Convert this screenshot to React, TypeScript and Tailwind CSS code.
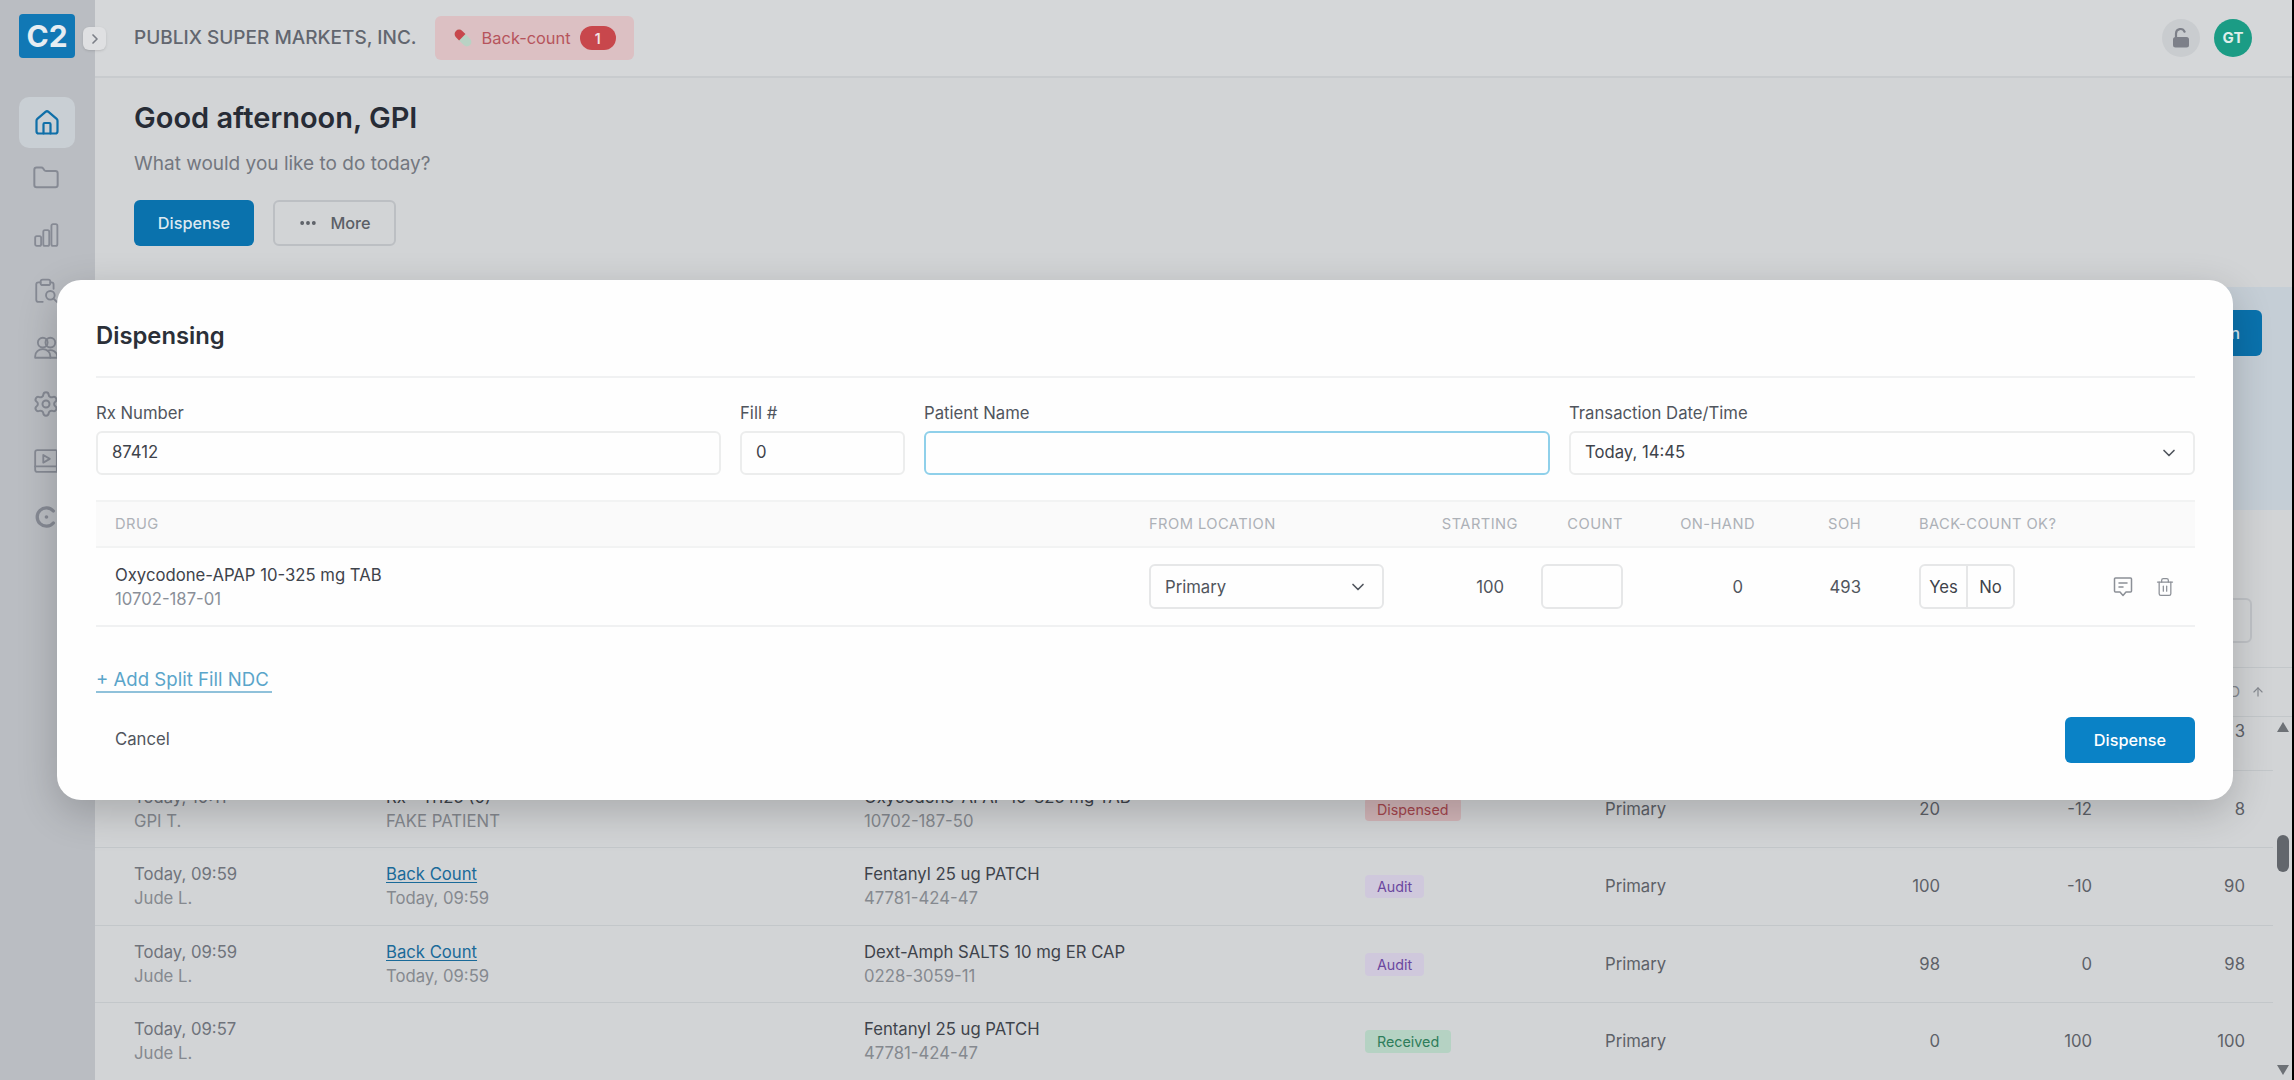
import { ChevronDown, ChevronRight, Ellipsis, House, Folder, Settings, Trash2, ArrowUp } from "lucide-react";

const iconProps = { width: 26, height: 26, viewBox: "0 0 24 24", fill: "none", stroke: "#868a94", strokeWidth: 1.7, strokeLinecap: "round" as const, strokeLinejoin: "round" as const };

function Bars() {
  return (
    <svg {...iconProps}>
      <rect x="2" y="13" width="5.5" height="9" rx="1.5" />
      <rect x="9.5" y="7.5" width="5.5" height="14.5" rx="1.5" />
      <rect x="17" y="2" width="5.5" height="20" rx="1.5" />
    </svg>
  );
}
function ClipSearch() {
  return (
    <svg {...iconProps}>
      <path d="M7 4H5a2 2 0 0 0-2 2v14a2 2 0 0 0 2 2h4" />
      <path d="M16 4h1a2 2 0 0 1 2 2v4" />
      <rect x="7" y="1.500" width="9" height="5" rx="2" />
      <circle cx="16" cy="16" r="4" />
      <path d="m19 19 3.500 3.500" />
    </svg>
  );
}
function People() {
  return (
    <svg {...iconProps}>
      <circle cx="9" cy="7" r="4.500" />
      <circle cx="16" cy="7" r="4.500" />
      <path d="M2 21v-1.500a7 6.500 0 0 1 14 0V21Z" />
      <path d="M13.500 14.500a6.500 6 0 0 1 9 5.500v1H16" />
    </svg>
  );
}
function BookPlay() {
  return (
    <svg {...iconProps}>
      <path d="M2 17V4a2 2 0 0 1 2-2h17a1 1 0 0 1 1 1v14Z" />
      <path d="M2 17v3a2 2 0 0 0 2 2h18v-5" />
      <path d="m9.500 6.500 6 3.500-6 3.500Z" />
    </svg>
  );
}
function LogoC() {
  return (
    <svg width="22" height="24" viewBox="0 0 24 24" fill="none">
      <path d="M20 5.500A10 10 0 1 0 20 18.500" stroke="#868a94" strokeWidth="3.600" strokeLinecap="round" />
      <circle cx="12.500" cy="12" r="2" fill="#868a94" />
    </svg>
  );
}
function Pill() {
  return (
    <svg width="22" height="22" viewBox="0 0 22 22">
      <g transform="rotate(45 11 11)">
        <rect x="1" y="6.500" width="20" height="9" rx="4.500" fill="#b9d2c4" />
        <path d="M5.500 6.500H10v9H5.500a4.500 4.500 0 0 1 0-9Z" fill="#c8474c" />
      </g>
    </svg>
  );
}
function Comment() {
  return (
    <svg width="20" height="22" viewBox="0 0 20 22" fill="none" stroke="#8c9097" strokeWidth="1.500" strokeLinejoin="round" strokeLinecap="round">
      <path d="M2.500 2h15a1 1 0 0 1 1 1v12a1 1 0 0 1-1 1H13l-3 3.500L7 16H2.500a1 1 0 0 1-1-1V3a1 1 0 0 1 1-1Z" />
      <path d="M6 7h8M6 11h4" />
    </svg>
  );
}
function OpenLock() {
  return (
    <svg width="20" height="22" viewBox="0 0 20 22" fill="none">
      <path d="M5 10V6.500a4.500 4.500 0 0 1 8.600-1.800" stroke="#7d8089" strokeWidth="2.200" strokeLinecap="round" />
      <rect x="2" y="10" width="16" height="10.500" rx="2.500" fill="#7d8089" />
    </svg>
  );
}

function NavIcon({ children }: { children: React.ReactNode }) {
  return <div className="flex h-[56.5px] items-center justify-center pr-[3px]">{children}</div>;
}

type Row = {
  t?: string; u?: string; link?: string; sub?: string; sub1?: string;
  drug?: string; ndc?: string; badge?: string; loc?: string; a?: string; b?: string; c: string;
};

const rows: Row[] = [
  { c: "3" },
  { t: "Today, 10:11", u: "GPI T.", sub1: "Rx - 11125 (0)", sub: "FAKE PATIENT", drug: "Oxycodone-APAP 10-325 mg TAB", ndc: "10702-187-50", badge: "Dispensed", loc: "Primary", a: "20", b: "-12", c: "8" },
  { t: "Today, 09:59", u: "Jude L.", link: "Back Count", sub: "Today, 09:59", drug: "Fentanyl 25 ug PATCH", ndc: "47781-424-47", badge: "Audit", loc: "Primary", a: "100", b: "-10", c: "90" },
  { t: "Today, 09:59", u: "Jude L.", link: "Back Count", sub: "Today, 09:59", drug: "Dext-Amph SALTS 10 mg ER CAP", ndc: "0228-3059-11", badge: "Audit", loc: "Primary", a: "98", b: "0", c: "98" },
  { t: "Today, 09:57", u: "Jude L.", drug: "Fentanyl 25 ug PATCH", ndc: "47781-424-47", badge: "Received", loc: "Primary", a: "0", b: "100", c: "100" },
];

function Badge({ name }: { name?: string }) {
  if (!name) return null;
  if (name === "Dispensed") return <span className="rounded-[4px] bg-[#d3b6b9] px-[12px] py-[3px] text-[14.3px] leading-[18px] text-[#a5464e]">{name}</span>;
  if (name === "Audit") return <span className="rounded-[4px] bg-[#cfc8dc] px-[12px] py-[3px] text-[14.3px] leading-[18px] text-[#6b479f]">{name}</span>;
  return <span className="rounded-[4px] bg-[#b5d2c3] px-[12px] py-[3px] text-[14.3px] leading-[18px] text-[#2e7d5b]">{name}</span>;
}

function TableRow({ r }: { r: Row }) {
  return (
    <div className="grid h-[77.5px] shrink-0 grid-cols-[291px_478px_501px_240px_335px_152px_153px_28px] items-center border-b border-[#c3c7ca] text-[16.7px] leading-[24px]">
      <div className="pl-[39px]">
        <div className="text-[#6f737b]">{r.t}</div>
        <div className="text-[#85898f]">{r.u}</div>
      </div>
      <div>
        {r.link && <div className="text-[#1a6a99] underline underline-offset-2">{r.link}</div>}
        {r.sub1 && <div className="text-[#3e434b]">{r.sub1}</div>}
        {r.sub && <div className="text-[#85898f]">{r.sub}</div>}
      </div>
      <div>
        <div className="text-[#3e434b]">{r.drug}</div>
        <div className="text-[#85898f]">{r.ndc}</div>
      </div>
      <div><Badge name={r.badge} /></div>
      <div className="flex justify-between text-[#5d6168]">
        <span>{r.loc}</span>
        <span>{r.a}</span>
      </div>
      <div className="text-right text-[#5d6168]">{r.b}</div>
      <div className="text-right text-[#5d6168]">{r.c}</div>
      <div />
    </div>
  );
}

const headCell = "text-[14.7px] uppercase leading-[20px] tracking-[0.03em] text-[#adb1b7]";

export default function App() {
  return (
    <div className="relative flex h-[1080px] w-[2294px] overflow-hidden bg-[#d2d4d6] font-['Inter',sans-serif]">
      <aside className="flex w-[95px] shrink-0 flex-col bg-[#babdc2]">
        <div className="flex h-[97px] shrink-0 items-start pl-[19px] pt-[14px]">
          <div className="flex h-[44px] w-[56px] items-center justify-center rounded-[4px] bg-[#1178b5] text-[30px] font-bold leading-none text-[#e6edf2]">C2</div>
        </div>
        <div className="mx-[19px] flex h-[51px] w-[56px] items-center justify-center rounded-[10px] bg-[#c9cfd4]">
          <House size={28} color="#0f6fa8" strokeWidth={1.9} />
        </div>
        <div className="mt-[2px]">
          <NavIcon><Folder size={28} color="#868a94" strokeWidth={1.7} /></NavIcon>
          <NavIcon><Bars /></NavIcon>
          <NavIcon><ClipSearch /></NavIcon>
          <NavIcon><People /></NavIcon>
          <NavIcon><Settings size={28} color="#868a94" strokeWidth={1.7} /></NavIcon>
          <NavIcon><BookPlay /></NavIcon>
          <NavIcon><LogoC /></NavIcon>
        </div>
      </aside>

      <main className="flex min-w-0 flex-1 flex-col border-r-2 border-black">
        <header className="flex h-[78px] shrink-0 items-center border-b-2 border-[#c8cbce] bg-[#d5d7d9] pl-[39px] pr-[40px]">
          <div className="text-[19px] font-medium text-[#62666f]">PUBLIX SUPER MARKETS, INC.</div>
          <div className="ml-[18px] flex h-[44px] w-[199px] items-center rounded-[6px] bg-[#dcc0c3] pl-[17px]">
            <Pill />
            <span className="ml-[8px] text-[16.4px] text-[#b6545c]">Back-count</span>
            <span className="ml-[9px] flex h-[24px] w-[36px] items-center justify-center rounded-full bg-[#c8474c] text-[14px] font-semibold text-[#f1e3e4]">1</span>
          </div>
          <div className="ml-auto flex items-center gap-[14px]">
            <div className="flex h-[38px] w-[38px] items-center justify-center rounded-full bg-[#c9cccf]">
              <OpenLock />
            </div>
            <div className="flex h-[38px] w-[38px] items-center justify-center rounded-full bg-[#1b9c85] text-[15px] font-bold text-[#dfeeea]">GT</div>
          </div>
        </header>

        <section className="h-[209px] shrink-0 pl-[39px] pt-[21px]">
          <h1 className="text-[29px] font-semibold leading-[38px] text-[#272c36]">Good afternoon, GPI</h1>
          <p className="mt-[14px] text-[19px] leading-[26px] text-[#73777f]">What would you like to do today?</p>
          <div className="mt-[23px] flex gap-[19px]">
            <div className="flex h-[46px] w-[120px] items-center justify-center rounded-[6px] bg-[#0a72ad] text-[16.3px] font-medium text-[#dce9f1]">Dispense</div>
            <div className="flex h-[46px] w-[123px] items-center justify-center gap-[12px] rounded-[6px] border-2 border-[#bcbfc3] text-[16.3px] font-medium text-[#5b5f66]">
              <Ellipsis size={20} color="#5b5f66" strokeWidth={2.6} />
              More
            </div>
          </div>
        </section>

        <section className="flex h-[223px] shrink-0 justify-end bg-[#c5ced6] pr-[30px] pt-[23px]">
          <div className="flex h-[46px] w-[120px] items-center justify-end rounded-[6px] bg-[#0a72ad] pr-[22px] text-[16.3px] font-medium text-[#dce9f1]">Scan</div>
        </section>

        <section className="flex h-[157px] shrink-0 justify-end pr-[40px] pt-[88px]">
          <div className="h-[45px] w-[300px] rounded-[6px] border-2 border-[#bfc2c6]" />
        </section>

        <div className="grid h-[50px] shrink-0 grid-cols-[1fr_19px] items-center border-y border-[#c3c7ca]">
          <div className="flex items-center justify-end gap-[11px] pr-[8px] text-[14.7px] text-[#85898f]">
            <span>END</span>
            <ArrowUp size={14} color="#85898f" />
          </div>
          <div />
        </div>

        <div className="flex min-h-0 flex-1">
          <div className="min-w-0 flex-1 overflow-hidden">
            <div className="-mt-[24px]">
              {rows.map((r, i) => <TableRow key={i} r={r} />)}
            </div>
          </div>
          <div className="flex w-[19px] shrink-0 flex-col items-center pb-[5px] pt-[5px]">
            <svg width="12" height="10" viewBox="0 0 12 10"><path d="M6 0l6 10H0Z" fill="#6d7176" /></svg>
            <div className="mt-[103px] h-[37px] w-[12px] rounded-full bg-[#62666c]" />
            <svg className="mt-auto" width="12" height="10" viewBox="0 0 12 10"><path d="M6 10 12 0H0Z" fill="#6d7176" /></svg>
          </div>
        </div>
      </main>

      <div className="absolute left-[83px] top-[27px] flex h-[23px] w-[23px] items-center justify-center rounded-[6px] bg-[#dfe0e2] shadow-sm">
        <ChevronRight size={16} color="#7b7f87" strokeWidth={2.5} />
      </div>

      <div className="absolute left-[57px] top-[280px] flex h-[520px] w-[2176px] flex-col rounded-[24px] bg-[#fefefe] pl-[39px] pr-[38px] pt-[37px] shadow-[0_12px_40px_rgba(0,0,0,0.2)]">
        <h2 className="text-[23.8px] font-semibold leading-[38px] text-[#2b3038]">Dispensing</h2>
        <div className="mt-[21px] h-[2px] bg-[#f0f1f2]" />

        <div className="mt-[23px] grid grid-cols-[625px_165px_626px_1fr] gap-x-[19px] text-[16.7px] text-[#50555d]">
          <div>
            <label className="block leading-[24px]">Rx Number</label>
            <div className="mt-[6px] flex h-[44px] items-center rounded-[6px] border-2 border-[#eceded] pl-[14px] text-[#3e434b]">87412</div>
          </div>
          <div>
            <label className="block leading-[24px]">Fill #</label>
            <div className="mt-[6px] flex h-[44px] items-center rounded-[6px] border-2 border-[#eceded] pl-[14px] text-[#3e434b]">0</div>
          </div>
          <div>
            <label className="block leading-[24px]">Patient Name</label>
            <div className="mt-[6px] h-[44px] rounded-[6px] border-2 border-[#8fd0ea]" />
          </div>
          <div>
            <label className="block leading-[24px]">Transaction Date/Time</label>
            <div className="mt-[6px] flex h-[44px] items-center justify-between rounded-[6px] border-2 border-[#eceded] pl-[14px] pr-[14px] text-[#3e434b]">
              Today, 14:45
              <ChevronDown size={20} color="#50555d" strokeWidth={2} />
            </div>
          </div>
        </div>

        <div className="mt-[25px] grid h-[48px] grid-cols-[1053px_235px_134px_105px_132px_106px_1fr] items-center border-y-2 border-[#f2f3f3] bg-[#fafafa]">
          <div className={`pl-[19px] ${headCell}`}>Drug</div>
          <div className={headCell}>From Location</div>
          <div className={`text-right ${headCell}`}>Starting</div>
          <div className={`text-right ${headCell}`}>Count</div>
          <div className={`text-right ${headCell}`}>On-Hand</div>
          <div className={`text-right ${headCell}`}>SOH</div>
          <div className={`pl-[58px] ${headCell}`}>Back-Count OK?</div>
        </div>

        <div className="grid h-[79px] grid-cols-[1053px_235px_134px_105px_132px_106px_1fr] items-center border-b-2 border-[#f0f1f2] text-[16.7px] leading-[24px]">
          <div className="pl-[19px]">
            <div className="text-[#3e434b]">Oxycodone-APAP 10-325 mg TAB</div>
            <div className="text-[#8a8f98]">10702-187-01</div>
          </div>
          <div className="flex h-[45px] items-center justify-between rounded-[6px] border-2 border-[#e6e7e8] pl-[14px] pr-[14px] text-[#50555d]">
            Primary
            <ChevronDown size={20} color="#50555d" strokeWidth={2} />
          </div>
          <div className="pr-[14px] text-right text-[#50555d]">100</div>
          <div className="flex justify-end"><div className="h-[45px] w-[82px] rounded-[6px] border-2 border-[#e6e7e8]" /></div>
          <div className="pr-[12px] text-right text-[#50555d]">0</div>
          <div className="text-right text-[#50555d]">493</div>
          <div className="flex items-center pl-[58px]">
            <div className="flex h-[45px] w-[96px] rounded-[6px] border-2 border-[#e6e7e8] text-[#3e434b]">
              <div className="flex w-[47px] items-center justify-center border-r-2 border-[#e6e7e8]">Yes</div>
              <div className="flex flex-1 items-center justify-center">No</div>
            </div>
            <div className="ml-[98px] flex items-center gap-[22px]">
              <Comment />
              <Trash2 size={20} color="#8c9097" strokeWidth={1.5} />
            </div>
          </div>
        </div>

        <div className="mt-[40px] w-[176px] whitespace-nowrap border-b-2 border-[#8fc1da] text-[18.6px] leading-[24px] text-[#5aa5ca]">+ Add Split Fill NDC</div>

        <div className="mt-[24px] flex items-center justify-between">
          <div className="pl-[19px] text-[16.7px] text-[#50555d]">Cancel</div>
          <div className="flex h-[46px] w-[130px] items-center justify-center rounded-[6px] bg-[#0a82c6] text-[16.3px] font-medium text-white">Dispense</div>
        </div>
      </div>
    </div>
  );
}
